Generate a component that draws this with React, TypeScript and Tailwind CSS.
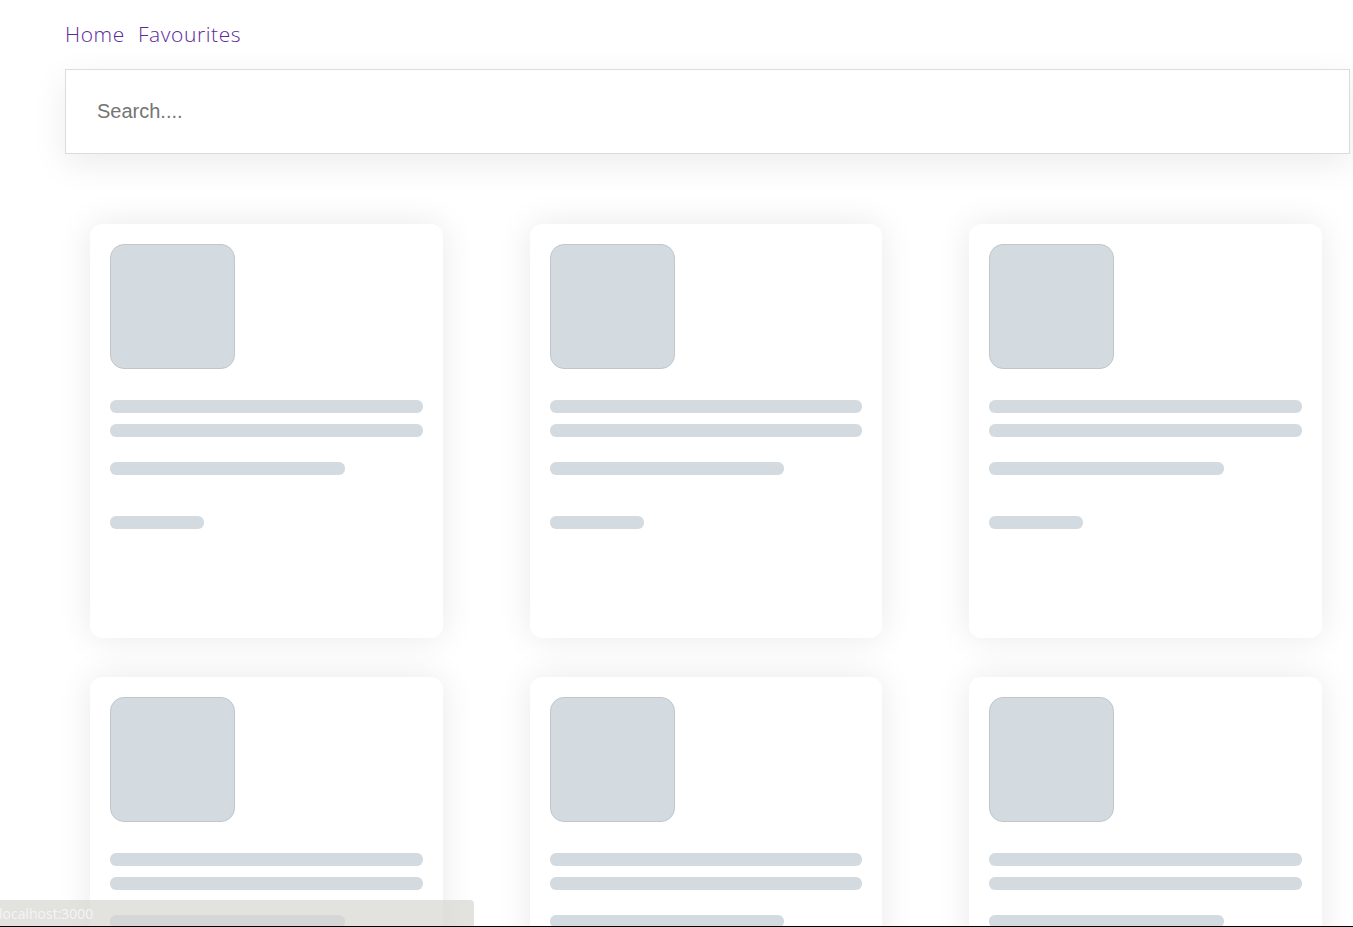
export default function App() {
  const cards = [0, 1, 2, 3, 4, 5];
  return (
    <div className="min-h-screen bg-white font-['Liberation_Sans',sans-serif]">
      <div className="pl-[65px] pr-[3px]">
        <nav className="flex gap-[13px] pt-[20px] h-[69px] font-['Open_Sans',sans-serif] font-light text-[21px] leading-[28px] tracking-[0.6px] text-[#5b2a9a]">
          <a href="#">Home</a>
          <a href="#">Favourites</a>
        </nav>
        <div className="h-[85px] border border-[#dcdcdc] bg-white shadow-[0_10px_35px_rgba(0,0,0,0.08)] flex items-center pl-[31px] pb-[2px]">
          <input
            className="w-full outline-none text-[20px] text-[#333] placeholder:text-[#757575] font-['Liberation_Sans',sans-serif]"
            placeholder="Search...."
          />
        </div>
        <div className="grid grid-cols-[353px_352px_353px] gap-x-[87px] gap-y-[39px] pl-[25px] pt-[70px]">
          {cards.map((i) => (
            <div
              key={i}
              className="h-[414px] rounded-[12px] bg-white p-[20px] shadow-[0_0_35px_rgba(0,0,0,0.09)]"
            >
              <div className="w-[125px] h-[125px] rounded-[14px] bg-[#d3dbe0] border border-[#c0c6c9]" />
              <div className="mt-[31px] h-[13px] rounded-[6px] bg-[#d3dbe0]" />
              <div className="mt-[11px] h-[13px] rounded-[6px] bg-[#d3dbe0]" />
              <div className="mt-[25px] h-[13px] w-3/4 rounded-[6px] bg-[#d3dbe0]" />
              <div className="mt-[41px] h-[13px] w-[30%] rounded-[6px] bg-[#d3dbe0]" />
            </div>
          ))}
        </div>
      </div>
      <div className="fixed left-0 bottom-[1px] w-[474px] h-[26px] bg-[rgba(214,214,210,0.7)] rounded-tr-[4px] flex items-center font-['Open_Sans',sans-serif] text-[14px] text-[#f4f4f4] -indent-[1px]">
        localhost:3000
      </div>
      <div className="fixed left-0 right-0 bottom-0 h-[1px] bg-black" />
    </div>
  );
}
